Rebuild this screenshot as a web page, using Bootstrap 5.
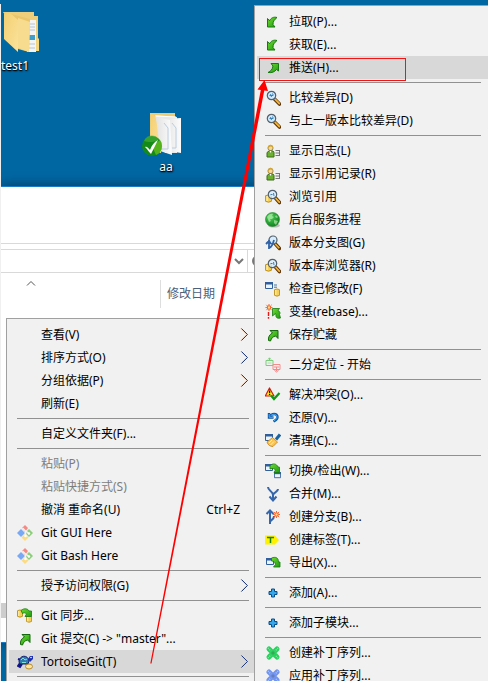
<!DOCTYPE html>
<html lang="zh-CN">
<head>
<meta charset="utf-8">
<meta name="viewport" content="width=device-width, initial-scale=1">
<title>TortoiseGit</title>
<link rel="stylesheet" href="https://cdn.jsdelivr.net/npm/bootstrap@5.3.0/dist/css/bootstrap.min.css">
<style>
body{font-family:"Noto Sans","Noto Sans CJK SC",sans-serif;font-size:12px;line-height:16px;color:#000}
.desktop{background:#0067a3}
.edge{width:1px;top:4px;background:#f0f0f0;z-index:5}
.shortcut{color:#fff;text-shadow:1px 1px 2px #000,0 1px 1px #000;line-height:16px}
.sc-test{left:-19px;top:10px;width:68px}
.sc-aa{left:132px;top:111px;width:68px}
.explorer{left:1px;right:0;top:186px;height:457px;background:#fff;border-top:1px solid #1a7cc9;border-bottom:1px solid #1a7cc9;box-shadow:0 0 12px rgba(0,0,0,.45)}
.ribbon{height:57px;border-bottom:1px solid #d9d9d9}
.address{height:24px;margin-top:5px;border:solid #d9d9d9;border-width:1px 0}
.address-field{width:247px;border-right:1px solid #d9d9d9;padding-right:3px}
.columns{height:42px}
.col-name{width:160px;height:28px;margin-top:7px;border-right:1px solid #dedede}
.col-name svg{margin-left:24px}
.col-date{color:#4c607a;margin:13px 0 0 6px}
.scroll-stub{left:0;top:416px;width:6px;height:15px;background:#cdcdcd}
.menu{background:#f1f1f1;border:1px solid #a0a0a0;padding:4px 2px}
.menu-main{left:6px;top:318px;width:252px;padding-right:3px}
.menu-git{left:254px;right:0;top:5px;border-right:0;padding-right:0;z-index:2}
.menu-row{height:23px;border:0;background:none;padding:0 0 0 8px;color:#000;line-height:23px;white-space:nowrap}
.menu-row:hover,.menu-row.picked{background:#d8d8d8}
.menu-row:disabled{color:#7d7d7d}
.ico{width:16px;height:16px;margin-right:8px;flex:none}
.chev{width:9px;height:15px;margin-right:5px}
.keys{margin-right:14px}
.menu hr{margin:3px 5px 3px 8px;border:0;height:1px;background:#919191;opacity:1}
.menu-git hr{margin-right:7px}
.callout{left:259px;top:58px;width:147px;height:23px;border:1px solid #f01414;z-index:3;pointer-events:none}
.arrow{left:0;top:0;z-index:4;pointer-events:none}
</style>
<script src="https://cdn.jsdelivr.net/npm/bootstrap@5.3.0/dist/js/bootstrap.bundle.min.js"></script>
</head>
<body>
<svg class="position-absolute" width="0" height="0" aria-hidden="true">
<defs>
<linearGradient id="gG" x1="0" y1="0" x2="1" y2="1"><stop offset="0" stop-color="#6fdc30"/><stop offset="1" stop-color="#1d9a12"/></linearGradient>
<radialGradient id="gBall" cx=".35" cy=".3" r=".8"><stop offset="0" stop-color="#4fd45c"/><stop offset="1" stop-color="#0a7a18"/></radialGradient>
<linearGradient id="gFold" x1="0" y1="0" x2="1" y2="1"><stop offset="0" stop-color="#f3cf72"/><stop offset="1" stop-color="#fbe39c"/></linearGradient>
<linearGradient id="gPage" x1="0" y1="0" x2="1" y2="0"><stop offset="0" stop-color="#e2e2e2"/><stop offset="1" stop-color="#fcfcfc"/></linearGradient>
</defs>
<symbol id="pull" viewBox="0 0 16 16"><path d="M2.500 4.500v8.500h7.500L8 10.500c0-3 1-4.500 4-7-3.500-1-6 .5-7.500 3.200z" fill="url(#gG)" stroke="#16780e"/></symbol>
<symbol id="push" viewBox="0 0 16 16"><path d="M6 3.500h7.500V11l-2-1.500C9.500 12 7 13 3 12.500c3-1.500 4.500-3 5-6.500z" fill="url(#gG)" stroke="#16780e"/></symbol>
<symbol id="stash" viewBox="0 0 16 16"><path d="M5 3.500h8v8L10.700 9C8 9.500 6.500 11 5.500 14l-2-.5C3 10 4.500 7.500 7.500 6z" fill="url(#gG)" stroke="#16680e"/></symbol>
<symbol id="lens" viewBox="0 0 16 16"><path d="M9.500 9l5 5" stroke="#5a3208" stroke-width="3.600" stroke-linecap="round"/><path d="M10 9.200l4.300 4.300" stroke="#f2b437" stroke-width="1.800" stroke-linecap="round"/><circle cx="6.500" cy="5.500" r="4.200" fill="#cfe9ff" stroke="#51606c" stroke-width="1.200"/><path d="M4.500 5.500h3.500M5.500 4l1 3M7.500 3.500l.8 2" stroke="#3a83b8"/></symbol>
<symbol id="cyl" viewBox="0 0 6 8" preserveAspectRatio="none"><path d="M.5 1.500Q3 .2 5.500 1.500v5Q3 8 .5 6.500z" fill="#f6cf58" stroke="#b58a17" stroke-width=".8"/><path d="M1.800 1.800v4.500" stroke="#fff2b8"/></symbol>
<symbol id="browse" viewBox="0 0 16 16"><use href="#cyl" x="0" y="5" width="7" height="9"/><path d="M10.500 9l4 4.500" stroke="#5a3208" stroke-width="3.600" stroke-linecap="round"/><path d="M10.500 9l3.800 4.200" stroke="#f2b437" stroke-width="1.800" stroke-linecap="round"/><circle cx="7.500" cy="5.500" r="4.200" fill="#d7edff" fill-opacity=".8" stroke="#51606c" stroke-width="1.200"/><path d="M5.500 5.500h2M8.500 4l.5 3" stroke="#3a83b8"/></symbol>
<symbol id="graph" viewBox="0 0 16 16"><path d="M10 8.500l4.500 5" stroke="#5a3208" stroke-width="3.400" stroke-linecap="round"/><path d="M10.300 9l4 4.300" stroke="#f2b437" stroke-width="1.600"/><circle cx="8" cy="5" r="4" fill="#d7edff" stroke="#51606c" stroke-width="1.200"/><path d="M4 14V5M1 9l3-3 2 3M4 13c3-1 4-4 5-8" fill="none" stroke="#2f62a8" stroke-width="1.800"/></symbol>
<symbol id="log" viewBox="0 0 16 16"><circle cx="5.500" cy="5" r="2.600" fill="#f5d79a" stroke="#8a6a20" stroke-width=".7"/><path d="M3 5c-.5-4 5-4 5-1L5.500 3.500z" fill="#d5a72b"/><path d="M2 14V9.500l2-1.500h4l1 1.500V14z" fill="#6cb02f" stroke="#3d6b1b"/><path d="M4.500 8L5.500 10l1-2z" fill="#fff"/><path d="M10.500 7.500H15M10.500 10H15M10.500 12.500H15M14.500 7v6" stroke="#777"/></symbol>
<symbol id="globe" viewBox="0 0 16 16"><ellipse cx="9" cy="13.500" rx="6" ry="2" fill="#999" opacity=".6"/><circle cx="7.500" cy="7.500" r="7" fill="url(#gBall)" stroke="#23862b" stroke-width=".6"/><path d="M2 5c2-3 4-3.500 6-3l-1 2 2 1-2 2H5l1 2-2 1zM9 8l4 1-2 4-2-2zM11 3l2 2-1 1-2-1z" fill="#c9f5be" opacity=".6"/></symbol>
<symbol id="win" viewBox="0 0 8 8"><path d="M.5 .5h7v6h-7z" fill="#eaf4ff" stroke="#315f9d"/><path d="M0 0h8v2.500H0z" fill="#315f9d"/></symbol>
<symbol id="check" viewBox="0 0 16 16"><use href="#win" x="0" y="1" width="8" height="8"/><path d="M9 4h3M9 6.200h3" stroke="#49759f"/><use href="#cyl" x="9" y="7" width="6" height="9"/></symbol>
<symbol id="spark" viewBox="0 0 8 8"><circle cx="4" cy="4" r="2" fill="#ffe08a" stroke="#f05a1c" stroke-width="1.200"/><path d="M4 0v1.500M4 6.500V8M0 4h1.500M6.500 4H8M1 1l1.200 1.200M5.800 5.800L7 7M7 1L5.800 2.200M1 7l1.200-1.200" stroke="#f0501c"/></symbol>
<symbol id="rebase" viewBox="0 0 16 16"><use href="#spark" x="0" y="0" width="8" height="7"/><path d="M3.500 8v4M3.500 13v1.800" stroke="#e81818" stroke-width="1.400"/><path d="M7.500 4.500h7L13 6.500c2 1 2.500 2.500 1.500 4l1 3.500c-3 1-5-.5-4.500-3l-.5-1.500L7.500 12z" fill="url(#gG)" stroke="#16780e" stroke-width=".8"/></symbol>
<symbol id="bisect" viewBox="0 0 16 16"><g fill="none"><path d="M1 3.500h7v5H1zM4.500 1v3M3 2.500L4.500.8 6 2.500" stroke="#7ecb7e"/><path d="M8 7.500h7v5H8zM11.500 10v4M9.500 13l2 2.300 2-2.300M9 10h5" stroke="#f58a8a"/></g><path d="M2.500 6h4" stroke="#a8dca8"/></symbol>
<symbol id="resolve" viewBox="0 0 16 16"><path d="M4.500 1L9 9H.3z" fill="#ffe81a" stroke="#d11b10" stroke-width="1.200" stroke-linejoin="round"/><path d="M4.600 3.500v2.800M4.600 7v1" stroke="#111" stroke-width="1.300"/><path d="M6 8.500l3 3.500 5.500-6" fill="none" stroke="#0a9a13" stroke-width="2.200"/></symbol>
<symbol id="revert" viewBox="0 0 16 16"><path d="M4 3v4.500h4.500M4.500 7c2-4 8-4 8 0 0 2.500-1.500 3-4 4.500" fill="none" stroke="#0d55a5" stroke-width="2.400"/><path d="M4.200 4v3.300H8M5 6.500c2-3 7-3 7 .5 0 2-1 2.500-3 3.800" fill="none" stroke="#4aa9f0"/></symbol>
<symbol id="clean" viewBox="0 0 16 16"><use href="#win" x="0" y="1" width="8" height="8"/><path d="M15 1.500l-4 5" stroke="#1764a5" stroke-width="3"/><path d="M7.500 4.500l5 4.500-4.500 4.500c-3 0-5-1.500-6-4.500z" fill="#f9c451" stroke="#c77f13" stroke-width=".8"/><path d="M4 10l3-3M5.500 12l3.500-3.500" stroke="#fff0a8"/></symbol>
<symbol id="switch" viewBox="0 0 16 16"><use href="#win" x="0" y="1" width="8" height="8"/><use href="#win" x="9" y="9" width="7" height="7"/><path d="M5 2.500c3-2.500 6.500-2 8 1.500l1.500.2V9.500H9L10.500 7C9.500 5.500 8 5 5 6z" fill="url(#gG)" stroke="#16780e" stroke-width=".8"/></symbol>
<symbol id="merge" viewBox="0 0 16 16"><path d="M3 1c0 4 5 4 5 8v5M13 3c0 3-4 3-5 6M4.500 10.500L8 14.500l3.500-4" fill="none" stroke="#3667aa" stroke-width="2"/></symbol>
<symbol id="branch" viewBox="0 0 16 16"><path d="M5 15V2M1.500 5L5 1.500 8.500 5M5 13c0-2 4-2 4-6" fill="none" stroke="#3667aa" stroke-width="2"/><use href="#spark" x="8" y="2" width="7" height="7"/></symbol>
<symbol id="tag" viewBox="0 0 16 16"><path d="M0 3.500h10l4 4.500-4 4.500H0z" fill="#fff200"/><path d="M2 5.500h7M5.500 5.500V11" stroke="#188018" stroke-width="1.500"/></symbol>
<symbol id="export" viewBox="0 0 16 16"><use href="#win" x="1" y="3" width="8" height="8"/><path d="M6.500 3c4-1.500 7-.5 7 4h1.500v5H8.500l2-2.500C10 7 9 6 6.500 6z" fill="url(#gG)" stroke="#16780e" stroke-width=".8"/></symbol>
<symbol id="plus" viewBox="0 0 16 16"><path d="M6.500 4h3v2.500H12v3H9.500V12h-3V9.500H4v-3h2.500z" fill="#35a7ea" stroke="#0b4c86"/></symbol>
<symbol id="patch" viewBox="0 0 16 16"><path d="M4 4l8 8M12 4l-8 8" stroke="currentColor" stroke-width="5" stroke-linecap="round"/><path d="M3 3l3 3M13 3l-3 3M3 13l3-3M11 11l2 2" stroke="#fff" stroke-opacity=".45" stroke-width="1.500" stroke-dasharray="1 1"/><path d="M6 8l2-2 2 2-2 2z" fill="#555" opacity=".35"/></symbol>
<symbol id="git" viewBox="0 0 16 16"><path d="M5 3l3-3 3 3-3 4z" fill="#f48a83"/><path d="M0 8l4-4 4 4-4 4z" fill="#79a9f5"/><path d="M8 8l4-4 4 4-4 4z" fill="#8cce7c"/><path d="M4.500 12.500L8 9l3.500 3.500L8 16z" fill="#fbdc83"/><path d="M5.500 3l3 3v6M9 6l3 3" fill="none" stroke="#f1f1f1" stroke-width="1.500"/><circle cx="8.500" cy="11" r="1.200" fill="#fff"/><circle cx="12" cy="8.500" r="1.200" fill="#fff"/></symbol>
<symbol id="sync" viewBox="0 0 16 16"><use href="#cyl" x="0" y="1" width="6" height="9"/><use href="#cyl" x="9" y="7" width="6" height="8"/><path d="M4 2.500C7-.2 11 .5 12 3h2.500v5.500H8L9.500 6C8.500 4.500 7 4.500 5.500 5.500z" fill="url(#gG)" stroke="#16780e" stroke-width=".8"/></symbol>
<symbol id="turtle" viewBox="0 0 16 16"><path d="M1 5l3 1M3 9l-2 3 2 1 2-3M9 9l2 3" stroke="#14148c" stroke-width="2"/><path d="M2 8c0-7 9-8 10-1l-1 3H3z" fill="#2f7ab0" stroke="#13206e"/><path d="M4 6l2-2 2 2 2-1M5 8.500h4" fill="none" stroke="#7ee0d0"/><path d="M11 5l2-3h3v3l-3 3z" fill="#1c2fb0"/><circle cx="14" cy="3.500" r=".8" fill="#fff"/><ellipse cx="12" cy="12.500" rx="3.500" ry="2.500" fill="#fbe3a0" stroke="#b58a2b"/></symbol>
<symbol id="chev" viewBox="0 0 9 15"><path d="M1 1.500L7 7.500 1 13.500" fill="none" stroke="#f0b890"/><path d="M1.500 1.500l6 6-6 6" fill="none" stroke="#263c78"/></symbol>
</svg>

<main class="desktop position-relative vh-100 overflow-hidden">
<div class="edge position-absolute start-0 bottom-0"></div>

<div class="shortcut sc-test position-absolute d-flex flex-column align-items-center">
<svg width="48" height="48" viewBox="0 0 48 48"><path d="M12 2h31v4h4v22l3 3v10H38z" fill="#edcf7b"/><path d="M37 10h8v32h-9z" fill="#f4f4f4"/><path d="M38 14h6M38 17h6M38 20h6M38 34h6M38 38h6" stroke="#b5c6d3"/><path d="M38 25h6v5h-6z" fill="#3f9fca"/><path d="M46 28l3 2v11h-4z" fill="#f5d77f"/><path d="M17 3l22 6-1 33-11-3z" fill="#e9c66b"/><path d="M19 3l8 7v32L13 29V4z" fill="url(#gFold)"/><path d="M27 8l12 4-1 30-11-4z" fill="#f7dc8f"/></svg>
<span>test1</span>
</div>

<div class="shortcut sc-aa position-absolute d-flex flex-column align-items-center">
<svg width="48" height="48" viewBox="0 0 48 48"><path d="M8 2h25v9H20v26L8 40z" fill="#eccb74"/><path d="M9 3l10 5v34L8 38z" fill="url(#gFold)"/><path d="M13 4l22 2v36H23z" fill="#e8e8e8"/><path d="M23 8l16-1v35l-12-2z" fill="url(#gPage)"/><path d="M30 12l4 5v20h-4" fill="none" stroke="#b9cde0"/><path d="M14 6l14 3 2 35-12-4z" fill="url(#gPage)"/><path d="M22 12l4 5v21h-6" fill="none" stroke="#b9cde0"/><path d="M14 5l20 1" stroke="#fff"/><circle cx="10" cy="35" r="10" fill="#148b18"/><path d="M10 35L18 29c4 5 2 13-4 15z" fill="#6fc51c" opacity=".7"/><path d="M2 30c3-7 12-7 15-1-5 2-10 3-15 1z" fill="#4bb33d" opacity=".6"/><path d="M3 36c2-1 3 1 5 3 2-5 4-8 8-10-2 4-4 8-7 14-2-2-3-4-6-7z" fill="#fff"/></svg>
<span>aa</span>
</div>

<section class="explorer position-absolute">
<div class="ribbon"></div>
<div class="address d-flex align-items-center">
<div class="address-field d-flex justify-content-end align-items-center h-100"><svg width="10" height="8" viewBox="0 0 10 8"><path d="M1 2l4 4 4-4" fill="none" stroke="#777" stroke-width="2"/></svg></div>
<svg class="ms-1" width="12" height="12" viewBox="0 0 12 12"><path d="M9 2a5 5 0 1 0 2 5M9 0v4H5" fill="none" stroke="#777" stroke-width="2"/></svg>
</div>
<div class="columns d-flex">
<div class="col-name"><svg class="d-block" width="12" height="7" viewBox="0 0 12 7"><path d="M2 5.500l4-4 4 4" fill="none" stroke="#555"/></svg></div>
<span class="col-date">修改日期</span>
</div>
<div class="scroll-stub position-absolute"></div>
</section>

<nav class="menu menu-main position-absolute d-flex flex-column" aria-label="桌面菜单">
<button class="menu-row d-flex align-items-center"><span class="ico"></span>查看(V)<svg class="chev ms-auto"><use href="#chev"/></svg></button>
<button class="menu-row d-flex align-items-center"><span class="ico"></span>排序方式(O)<svg class="chev ms-auto"><use href="#chev"/></svg></button>
<button class="menu-row d-flex align-items-center"><span class="ico"></span>分组依据(P)<svg class="chev ms-auto"><use href="#chev"/></svg></button>
<button class="menu-row d-flex align-items-center"><span class="ico"></span>刷新(E)</button>
<hr>
<button class="menu-row d-flex align-items-center"><span class="ico"></span>自定义文件夹(F)...</button>
<hr>
<button class="menu-row d-flex align-items-center" disabled><span class="ico"></span>粘贴(P)</button>
<button class="menu-row d-flex align-items-center" disabled><span class="ico"></span>粘贴快捷方式(S)</button>
<button class="menu-row d-flex align-items-center"><span class="ico"></span>撤消 重命名(U)<span class="keys ms-auto">Ctrl+Z</span></button>
<button class="menu-row d-flex align-items-center"><svg class="ico"><use href="#git"/></svg>Git GUI Here</button>
<button class="menu-row d-flex align-items-center"><svg class="ico"><use href="#git"/></svg>Git Bash Here</button>
<hr>
<button class="menu-row d-flex align-items-center"><span class="ico"></span>授予访问权限(G)<svg class="chev ms-auto"><use href="#chev"/></svg></button>
<hr>
<button class="menu-row d-flex align-items-center"><svg class="ico"><use href="#sync"/></svg>Git 同步...</button>
<button class="menu-row d-flex align-items-center"><svg class="ico"><use href="#stash"/></svg>Git 提交(C) -&gt; "master"...</button>
<button class="menu-row picked d-flex align-items-center"><svg class="ico"><use href="#turtle"/></svg>TortoiseGit(T)<svg class="chev ms-auto"><use href="#chev"/></svg></button>
<hr>
</nav>

<nav class="menu menu-git position-absolute d-flex flex-column" aria-label="TortoiseGit">
<button class="menu-row d-flex align-items-center"><svg class="ico"><use href="#pull"/></svg>拉取(P)...</button>
<button class="menu-row d-flex align-items-center"><svg class="ico"><use href="#pull"/></svg>获取(E)...</button>
<button class="menu-row picked d-flex align-items-center"><svg class="ico"><use href="#push"/></svg>推送(H)...</button>
<hr>
<button class="menu-row d-flex align-items-center"><svg class="ico"><use href="#lens"/></svg>比较差异(D)</button>
<button class="menu-row d-flex align-items-center"><svg class="ico"><use href="#lens"/></svg>与上一版本比较差异(D)</button>
<hr>
<button class="menu-row d-flex align-items-center"><svg class="ico"><use href="#log"/></svg>显示日志(L)</button>
<button class="menu-row d-flex align-items-center"><svg class="ico"><use href="#log"/></svg>显示引用记录(R)</button>
<button class="menu-row d-flex align-items-center"><svg class="ico"><use href="#browse"/></svg>浏览引用</button>
<button class="menu-row d-flex align-items-center"><svg class="ico"><use href="#globe"/></svg>后台服务进程</button>
<button class="menu-row d-flex align-items-center"><svg class="ico"><use href="#graph"/></svg>版本分支图(G)</button>
<button class="menu-row d-flex align-items-center"><svg class="ico"><use href="#browse"/></svg>版本库浏览器(R)</button>
<button class="menu-row d-flex align-items-center"><svg class="ico"><use href="#check"/></svg>检查已修改(F)</button>
<button class="menu-row d-flex align-items-center"><svg class="ico"><use href="#rebase"/></svg>变基(rebase)...</button>
<button class="menu-row d-flex align-items-center"><svg class="ico"><use href="#stash"/></svg>保存贮藏</button>
<hr>
<button class="menu-row d-flex align-items-center"><svg class="ico"><use href="#bisect"/></svg>二分定位 - 开始</button>
<hr>
<button class="menu-row d-flex align-items-center"><svg class="ico"><use href="#resolve"/></svg>解决冲突(O)...</button>
<button class="menu-row d-flex align-items-center"><svg class="ico"><use href="#revert"/></svg>还原(V)...</button>
<button class="menu-row d-flex align-items-center"><svg class="ico"><use href="#clean"/></svg>清理(C)...</button>
<hr>
<button class="menu-row d-flex align-items-center"><svg class="ico"><use href="#switch"/></svg>切换/检出(W)...</button>
<button class="menu-row d-flex align-items-center"><svg class="ico"><use href="#merge"/></svg>合并(M)...</button>
<button class="menu-row d-flex align-items-center"><svg class="ico"><use href="#branch"/></svg>创建分支(B)...</button>
<button class="menu-row d-flex align-items-center"><svg class="ico"><use href="#tag"/></svg>创建标签(T)...</button>
<button class="menu-row d-flex align-items-center"><svg class="ico"><use href="#export"/></svg>导出(X)...</button>
<hr>
<button class="menu-row d-flex align-items-center"><svg class="ico"><use href="#plus"/></svg>添加(A)...</button>
<hr>
<button class="menu-row d-flex align-items-center"><svg class="ico"><use href="#plus"/></svg>添加子模块...</button>
<hr>
<button class="menu-row d-flex align-items-center"><svg class="ico" color="#27d15c"><use href="#patch"/></svg>创建补丁序列...</button>
<button class="menu-row d-flex align-items-center"><svg class="ico" color="#6f93ee"><use href="#patch"/></svg>应用补丁序列...</button>
</nav>

<div class="callout position-absolute"></div>
<svg class="arrow position-absolute" width="280" height="670" viewBox="0 0 280 670"><path d="M150.300 663.500L260.800 90l-3.300-.5L264.500 80l3.500 11-3.700-.5L151.500 663.500z" fill="#f00"/></svg>
</main>
</body>
</html>
